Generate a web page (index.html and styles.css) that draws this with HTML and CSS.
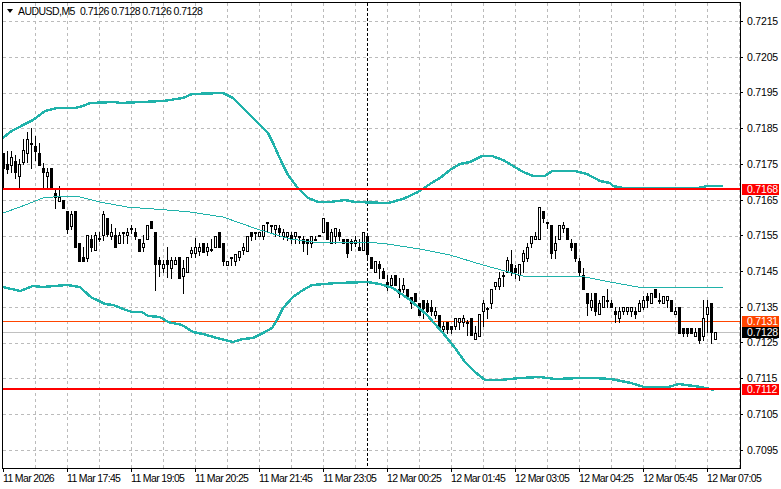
FILE: index.html
```html
<!DOCTYPE html>
<html lang="en">
<head>
  <meta charset="UTF-8">
  <meta name="viewport" content="width=device-width, initial-scale=1.0">
  <title>AUDUSD,M5</title>
  <link rel="stylesheet" href="styles.css">
</head>
<body>
  <div class="terminal">
    <div class="plot">
      <svg class="chart" id="chart" width="737" height="465" viewBox="3 3 737 465" xmlns="http://www.w3.org/2000/svg">
        <path class="grid" d="M3 21.5H740M3 57.5H740M3 93.5H740M3 128.5H740M3 164.5H740M3 200.5H740M3 236.5H740M3 272.5H740M3 307.5H740M3 343.5H740M3 378.5H740M3 414.5H740M3 450.5H740"/>
        <path class="grid" id="gridV"/>
        <path class="cursor" d="M367.5 3V468"/>
        <path class="level-bid" d="M3 332.5H740"/>
        <path class="level-ask" d="M3 321.5H740"/>
        <g id="candles"></g>
        <polyline class="band" points="3,138 10,132 23,125 33,120 45,111 57,108 75,108 83,106 90,103 115,102 120,103 163,101 183,98 192,94 223,93 233,98 242,107 250,115 258,123 268,133 273,143 282,163 288,175 297,187 308,198 318,202 330,202 345,200 355,202 388,203 403,199 418,192 430,184 440,178 450,170 460,164 470,162 482,156 492,156 503,160 515,167 523,172 533,176 545,176 552,171 575,171 587,174 600,181 610,183 613,186 623,188 697,188 708,186 723,186"/>
        <polyline class="band-mid" points="3,213 20,207 43,198 63,196 80,197 100,202 127,207 167,210 190,212 223,217 257,229 290,239 320,243 367,242 387,244 420,249 450,255 483,265 523,276 580,276 610,282 638,287 704,287 723,288"/>
        <polyline class="band" points="3,287 7,288 20,291 33,286 43,287 67,285 80,287 83,290 92,298 97,300 105,304 113,305 123,309 132,312 142,312 148,316 160,317 168,322 182,325 193,332 203,334 217,338 233,342 243,339 253,338 263,333 272,328 277,320 283,308 293,297 303,290 312,285 337,283 367,282 380,284 393,288 410,300 427,315 443,333 455,348 465,362 475,372 485,380 500,380 520,378 540,377 555,379 581,378 594,378 611,379 631,383 644,387 668,387 679,384 701,387 714,390"/>
        <path class="level-red" d="M3 189H740M3 389H740"/>
      </svg>
      <div class="legend">
        <span class="legend-arrow"></span>
        <span class="legend-name">AUDUSD,M5</span>
        <span>0.7126 0.7128 0.7126 0.7128</span>
      </div>
    </div>

    <div class="price-scale">
      <span class="price">0.7215</span>
      <span class="price">0.7205</span>
      <span class="price">0.7195</span>
      <span class="price">0.7185</span>
      <span class="price">0.7175</span>
      <span class="price">0.7165</span>
      <span class="price">0.7155</span>
      <span class="price">0.7145</span>
      <span class="price">0.7135</span>
      <span class="price">0.7125</span>
      <span class="price">0.7115</span>
      <span class="price">0.7105</span>
      <span class="price">0.7095</span>
      <span class="tag tag-high">0.7168</span>
      <span class="tag tag-ask">0.7131</span>
      <span class="tag tag-bid">0.7128</span>
      <span class="tag tag-low">0.7112</span>
    </div>

    <div class="time-scale">
      <span class="time">11 Mar 2026</span>
      <span class="time">11 Mar 17:45</span>
      <span class="time">11 Mar 19:05</span>
      <span class="time">11 Mar 20:25</span>
      <span class="time">11 Mar 21:45</span>
      <span class="time">11 Mar 23:05</span>
      <span class="time">12 Mar 00:25</span>
      <span class="time">12 Mar 01:45</span>
      <span class="time">12 Mar 03:05</span>
      <span class="time">12 Mar 04:25</span>
      <span class="time">12 Mar 05:45</span>
      <span class="time">12 Mar 07:05</span>
    </div>
  </div>

  <script src="script.js"></script>
</body>
</html>
```

FILE: styles.css
```css
html, body {
  margin: 0;
  height: 100%;
  background: #fff;
  color: #000;
  font-family: 'Liberation Sans', Arial, sans-serif;
  font-size: 10.5px;
  overflow: hidden;
}

.terminal {
  display: grid;
  grid-template-columns: 739px 40px;
  grid-template-rows: 467px 19px;
  padding: 2px 0 0 2px;
}

.plot {
  position: relative;
  border: 1px solid #000;
  overflow: hidden;
}

.chart {
  display: block;
  shape-rendering: crispEdges;
}

.grid {
  fill: none;
  stroke: #bbb;
  stroke-width: 1;
  stroke-dasharray: 3 3;
}

.cursor {
  fill: none;
  stroke: #000;
  stroke-width: 1;
  stroke-dasharray: 3 2;
}

.level-bid {
  stroke: #c0c0c0;
  stroke-width: 1;
}

.level-ask {
  stroke: #ff4500;
  stroke-width: 1;
}

.level-red {
  stroke: #f00;
  stroke-width: 2;
}

.band,
.band-mid {
  fill: none;
  stroke: #20b2aa;
  stroke-linejoin: round;
}

.band {
  stroke-width: 2.4;
}

.band-mid {
  stroke-width: 1;
}

.legend {
  position: absolute;
  top: 2px;
  left: 0;
  display: flex;
  align-items: center;
  height: 11px;
  letter-spacing: -0.55px;
}

.legend-arrow {
  width: 0;
  height: 0;
  margin: 1px 0 0 4px;
  border-top: 4px solid #000;
  border-left: 3.5px solid transparent;
  border-right: 3.5px solid transparent;
}

.legend-name {
  width: 62px;
  margin-left: 5px;
}

.price-scale {
  position: relative;
  display: flex;
  flex-direction: column;
  gap: 25.72px;
  padding-top: 14px;
  letter-spacing: -0.2px;
}

.price {
  position: relative;
  flex: 0 0 10px;
  line-height: 10px;
  padding-left: 6px;
}

.price::before {
  content: '';
  position: absolute;
  top: 5px;
  left: 0;
  width: 2px;
  height: 1px;
  background: #000;
}

.tag {
  position: absolute;
  left: 1px;
  width: 32px;
  height: 11px;
  padding-left: 5px;
  line-height: 11px;
  color: #fff;
}

.tag-high { top: 182px; background: #f00; }
.tag-ask { top: 314px; background: #ff4500; }
.tag-bid { top: 325px; background: #000; }
.tag-low { top: 382px; background: #f00; }

.time-scale {
  grid-column: 1 / 3;
  display: flex;
  padding-left: 1px;
  letter-spacing: -0.65px;
}

.time {
  position: relative;
  flex: 0 0 64px;
  padding-top: 3px;
  white-space: nowrap;
}

.time::before {
  content: '';
  position: absolute;
  top: 0;
  left: 0;
  width: 1px;
  height: 3px;
  background: #000;
}
```

FILE: script.js
```js
// one row per bar, page pixels: [high, body top, body bottom, low, 'w' white / 'b' black]
const bars = [
  [153,153,168,187,'b'],[151,164,169,173,'b'],[151,157,165,172,'w'],[155,161,172,178,'b'],
  [159,164,176,187,'w'],[139,150,162,164,'w'],[132,139,153,162,'w'],[128,143,144,168,'b'],
  [136,146,151,160,'b'],[143,153,165,165,'b'],[163,168,172,187,'b'],[168,172,176,187,'w'],
  [168,168,187,187,'b'],[188,193,197,208,'b'],[186,197,201,201,'w'],[200,200,208,208,'b'],
  [211,211,229,233,'b'],[211,214,226,229,'w'],[211,211,247,247,'b'],[243,243,261,261,'b'],
  [247,257,261,261,'b'],[235,235,258,261,'w'],[235,239,247,251,'b'],[232,235,250,250,'w'],
  [232,238,239,241,'b'],[211,214,235,240,'w'],[218,218,234,236,'b'],[224,232,236,239,'w'],
  [228,235,247,247,'b'],[232,235,243,243,'w'],[232,232,233,243,'b'],[228,232,235,243,'w'],
  [225,228,229,233,'b'],[228,232,236,239,'b'],[239,239,251,251,'b'],[235,243,247,251,'w'],
  [225,225,239,239,'w'],[221,221,228,228,'b'],[232,232,264,290,'b'],[257,260,264,276,'b'],
  [260,264,268,272,'w'],[247,260,264,277,'b'],[257,260,268,278,'w'],[257,260,264,264,'w'],
  [257,257,278,278,'b'],[260,268,276,293,'w'],[257,257,272,272,'w'],[247,250,253,257,'w'],
  [238,247,253,257,'w'],[243,247,251,255,'w'],[243,243,252,252,'b'],[243,247,251,255,'w'],
  [239,249,250,251,'b'],[236,236,247,247,'w'],[232,232,247,247,'b'],[243,243,261,265,'b'],
  [261,261,265,265,'w'],[257,257,258,265,'b'],[254,254,261,265,'w'],[251,251,257,260,'w'],
  [243,247,250,254,'w'],[236,236,251,251,'w'],[232,232,236,240,'b'],[232,232,233,239,'b'],
  [232,232,236,236,'w'],[225,225,236,239,'w'],[222,222,223,232,'b'],[225,225,226,232,'b'],
  [225,225,229,236,'w'],[225,228,232,236,'b'],[229,232,236,239,'w'],[232,232,236,240,'w'],
  [232,235,239,243,'b'],[232,232,236,243,'w'],[236,236,237,243,'b'],[236,239,243,251,'b'],
  [239,239,243,254,'b'],[236,236,243,247,'w'],[236,239,240,240,'b'],[235,235,236,236,'b'],
  [218,218,232,232,'w'],[222,222,239,239,'b'],[229,232,243,243,'w'],[228,228,236,243,'w'],
  [229,232,236,240,'b'],[239,239,243,243,'b'],[239,239,253,257,'b'],[239,241,243,250,'w'],
  [236,240,243,246,'w'],[239,247,250,250,'b'],[232,232,250,250,'w'],[236,236,254,257,'b'],
  [257,257,268,268,'b'],[261,261,272,272,'w'],[261,264,268,278,'b'],[268,271,278,278,'b'],
  [275,282,287,290,'b'],[275,278,285,288,'w'],[275,275,285,285,'b'],[278,289,293,297,'b'],
  [278,285,289,292,'w'],[289,289,297,297,'b'],[297,297,303,308,'b'],[293,293,301,301,'b'],
  [303,303,315,315,'b'],[300,300,308,318,'b'],[300,303,311,312,'b'],[300,307,311,315,'b'],
  [307,311,315,318,'w'],[315,315,327,327,'b'],[322,326,329,333,'w'],[322,322,329,333,'b'],
  [326,326,329,333,'b'],[318,318,326,329,'w'],[318,318,322,329,'w'],[315,318,322,326,'w'],
  [320,322,323,335,'b'],[318,318,335,335,'b'],[326,333,339,339,'w'],[314,314,336,336,'w'],
  [300,303,311,326,'w'],[307,308,309,318,'b'],[289,289,303,308,'w'],[282,282,286,289,'w'],
  [272,278,286,289,'w'],[272,275,276,286,'b'],[257,260,272,272,'w'],[250,264,272,275,'b'],
  [265,268,272,278,'b'],[264,264,275,280,'w'],[250,253,261,272,'w'],[243,247,258,261,'w'],
  [236,236,243,247,'w'],[232,236,239,239,'w'],[207,207,239,239,'w'],[211,211,218,222,'b'],
  [222,222,223,228,'b'],[225,225,253,258,'b'],[236,243,250,258,'w'],[225,225,239,239,'w'],
  [222,225,228,232,'w'],[228,228,239,239,'b'],[239,243,247,250,'b'],[243,243,258,261,'b'],
  [258,261,272,275,'b'],[268,275,289,289,'b'],[293,293,303,315,'b'],[293,300,307,310,'w'],
  [293,293,311,315,'b'],[300,303,314,314,'w'],[296,296,307,307,'w'],[289,300,301,307,'b'],
  [300,303,307,307,'b'],[307,311,314,322,'b'],[307,311,318,322,'w'],[307,307,311,314,'w'],
  [307,307,311,314,'w'],[307,307,311,316,'w'],[307,311,314,318,'b'],[300,303,311,311,'w'],
  [296,300,307,309,'w'],[293,296,300,307,'b'],[293,293,303,303,'w'],[289,289,297,297,'b'],
  [293,300,301,303,'b'],[296,296,303,303,'w'],[296,296,300,307,'w'],[300,300,311,311,'b'],
  [307,311,314,314,'w'],[307,307,333,333,'b'],[328,328,333,336,'b'],[328,328,333,336,'b'],
  [328,328,333,333,'b'],[328,332,336,336,'w'],[328,328,340,343,'b'],[300,318,336,340,'w'],
  [300,307,314,332,'w'],[303,303,332,343,'b'],[332,332,339,339,'w']
];

const svgNS = 'http://www.w3.org/2000/svg';

function addRect(parent, x, y, w, h, fill) {
  const r = document.createElementNS(svgNS, 'rect');
  r.setAttribute('x', x);
  r.setAttribute('y', y);
  r.setAttribute('width', w);
  r.setAttribute('height', h);
  r.setAttribute('fill', fill);
  parent.appendChild(r);
}

function drawCandles() {
  const group = document.getElementById('candles');
  bars.forEach((bar, i) => {
    const [high, top, bottom, low, kind] = bar;
    const x = 3 + i * 4;
    addRect(group, x, high, 1, low - high + 1, '#000');
    addRect(group, x - 1, top, 3, bottom - top + 1, '#000');
    if (kind === 'w' && bottom - top > 1) {
      addRect(group, x, top + 1, 1, bottom - top - 1, '#fff');
    }
  });
}

function drawVerticalGrid() {
  let d = '';
  for (let x = 35; x < 740; x += 32) {
    d += 'M' + (x + 0.5) + ' 3V468';
  }
  document.getElementById('gridV').setAttribute('d', d);
}

drawVerticalGrid();
drawCandles();
```
